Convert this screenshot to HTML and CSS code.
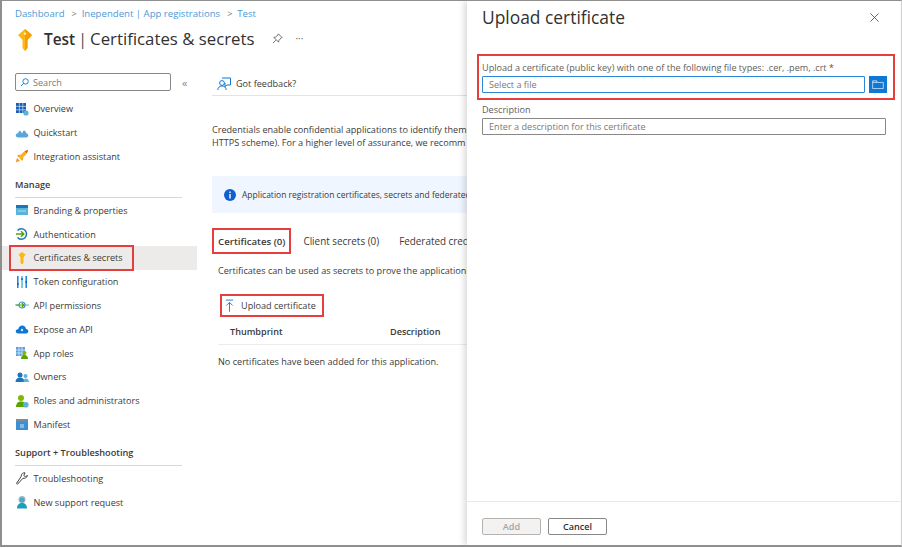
FILE: index.html
```html
<!DOCTYPE html>
<html lang="en">
<head>
<meta charset="utf-8">
<title>Test | Certificates &amp; secrets</title>
<link rel="stylesheet" href="styles.css">
</head>
<body>
<div class="frame">
  <main class="portal">
    <nav class="crumbs"><a>Dashboard</a><span class="sep">&gt;</span><a>Inependent | App registrations</a><span class="sep">&gt;</span><a>Test</a></nav>
    <header class="title-row">
      <svg class="title-key" viewBox="0 0 16 22"><path fill="#fdb813" d="M8 0 15 6 10.500 11V19L8 22 5.500 19V11L1 6Z"/><path fill="#f59e0b" d="M8 0 15 6 10.500 11V19L8 22Z"/><circle cx="8" cy="4.600" r="1.200" fill="#fff3c4"/></svg>
      <h1 class="title"><b>Test</b> <i class="bar">|</i> Certificates &amp; secrets</h1>
      <svg class="pin" viewBox="0 0 12 12"><path fill="none" stroke="#555" stroke-width=".9" d="M7 1 11 5 9.600 5.600 7.400 8.400 7.200 10 2 4.800 3.600 4.600 6.400 2.400ZM4.200 7.800 1 11"/></svg>
      <span class="more">···</span>
    </header>
    <div class="columns">
      <aside class="side">
        <div class="search-row">
          <div class="search">
            <svg class="search-ic" viewBox="0 0 10 10"><circle cx="6.200" cy="3.800" r="3" fill="none" stroke="#0078d4"/><path stroke="#0078d4" d="M4 6 1 9"/></svg>
            <span>Search</span>
          </div>
          <span class="collapse">«</span>
        </div>
        <ul class="menu first">
          <li class="item"><svg class="ic" viewBox="0 0 14 14"><path fill="#1b5fb4" d="M1 1h10v10H1z"/><path stroke="#cfe3f7" stroke-width=".7" d="M4.400 1v10M7.800 1v10M1 4.400h10M1 7.800h10"/><circle cx="11" cy="11" r="2.600" fill="#59b4d9"/></svg>Overview</li>
          <li class="item"><svg class="ic" viewBox="0 0 14 14"><path fill="#59a6dc" d="M3.400 11.500C1.500 11.500.6 10.300.8 9 1 7.800 2 7.100 3 7.200 3.500 5.500 4.600 4.500 5.400 4.800L7 7.500 8.600 4.500C10 4.600 11 5.800 11.200 7.200 12.500 7.200 13.400 8.200 13.300 9.500 13.200 10.700 12.200 11.500 11 11.500Z"/></svg>Quickstart</li>
          <li class="item"><svg class="ic" viewBox="0 0 14 14"><path fill="#f7941d" d="M.8 13.200 2 9 5 12Z"/><path fill="#f7941d" d="M2 6.500 5.500 5.500 4 8.500ZM7.500 12 8.500 8.500 5.500 10Z"/><path fill="#fbb216" d="M3.500 8 9 2.500 13.200.8 11.500 5 6 10.500Z"/><path fill="#d9541e" d="M9.800 2.200 13.200.8 11.800 4.200Z"/></svg>Integration assistant</li>
        </ul>
        <h2 class="group manage">Manage</h2>
        <ul class="menu">
          <li class="item"><svg class="ic" viewBox="0 0 14 14"><path fill="#59b4d9" d="M1 2h12v10H1z"/><path fill="#1b75bb" d="M1 2h12v3H1z"/><path fill="#b8e0f2" d="M3 7.500h8v1H3z"/></svg>Branding &amp; properties</li>
          <li class="item"><svg class="ic" viewBox="0 0 14 14"><path fill="none" stroke="#1b75bb" stroke-width="1.500" d="M2.500 3.500A5.200 5.200 0 1 1 2.500 10.500"/><path fill="none" stroke="#57a300" stroke-width="1.500" d="M1 7h7.500M6 4.300 8.800 7 6 9.700"/></svg>Authentication</li>
          <li class="item active"><span class="mark-cert"><svg class="ic" viewBox="0 0 14 14"><path fill="#fcb714" d="M7 1 10.500 3.500 8.500 6.500V12L7 13.500 5.500 12V6.500L3.500 3.500Z"/></svg>Certificates &amp; secrets</span></li>
          <li class="item"><svg class="ic" viewBox="0 0 14 14"><path stroke="#0f86d8" stroke-width="1.500" d="M2.800 1v12M11.200 1v12"/><path stroke="#59b4d9" stroke-width="1.500" d="M7 1v12"/><path stroke="#1b5fb4" stroke-width="1.500" d="M2.800 8v2M7 3v2M11.200 6v2"/></svg>Token configuration</li>
          <li class="item"><svg class="ic" viewBox="0 0 14 14"><path stroke="#59b4d9" stroke-width="1.200" d="M0 7h4M10 7h4"/><circle cx="7" cy="7" r="3" fill="none" stroke="#3a96d6" stroke-width="1.200"/><path fill="none" stroke="#57a300" stroke-width="1.200" d="M1 7h8M6.800 5 9 7 6.800 9"/></svg>API permissions</li>
          <li class="item"><svg class="ic" viewBox="0 0 14 14"><path fill="#0f78d4" d="M3.400 11.500C1.500 11.500.6 10.300.8 9 1 7.800 2 7 3.200 7.200 3.700 4.800 5.300 3.500 7.200 3.500 9.200 3.500 10.700 5 11 7 12.500 7.100 13.400 8.200 13.300 9.500 13.200 10.700 12.200 11.500 11 11.500Z"/><circle cx="7" cy="8" r="1.200" fill="#cfe8fb"/></svg>Expose an API</li>
          <li class="item"><svg class="ic" viewBox="0 0 14 14"><path fill="#5ea0dc" d="M1 1h9v9H1z"/><path stroke="#e6f1fb" stroke-width=".7" d="M4 1v9M7 1v9M1 4h9M1 7h9"/><circle cx="9.500" cy="7" r="2" fill="#7fba00"/><path fill="#57a300" d="M6 13c0-2.500 1.500-4 3.500-4s3.500 1.500 3.500 4z"/></svg>App roles</li>
          <li class="item"><svg class="ic" viewBox="0 0 14 14"><circle cx="5" cy="5" r="2.500" fill="#1b75bb"/><path fill="#1b75bb" d="M0.500 12c0-3 2-4.500 4.500-4.500S9.500 9 9.500 12z"/><circle cx="10.500" cy="6" r="2" fill="#59b4d9"/><path fill="#59b4d9" d="M8.500 12c0-2 .8-3.500 2.300-3.500S14 10 14 12z"/></svg>Owners</li>
          <li class="item"><svg class="ic" viewBox="0 0 14 14"><circle cx="6" cy="4" r="3" fill="#7fba00"/><path fill="#57a300" d="M1 13c0-3.500 2-5.500 5-5.500s5 2 5 5.500z"/><circle cx="10.800" cy="10.800" r="2.800" fill="#59b4d9"/></svg>Roles and administrators</li>
          <li class="item"><svg class="ic" viewBox="0 0 14 14"><path fill="#3e8fd0" d="M1 2h12v11H1z"/><path fill="#7d8b99" d="M1 2h12v2.500H1z"/><path fill="#cfe3f7" d="M5.500 7h1v4h-1zM7.500 7h1v4h-1z"/></svg>Manifest</li>
        </ul>
        <h2 class="group support">Support + Troubleshooting</h2>
        <ul class="menu">
          <li class="item"><svg class="ic" viewBox="0 0 14 14"><path fill="none" stroke="#444" d="M1.500 12.500 2.500 13.200 8 7.200C10 7.800 12 6.500 12.500 4.500L10.300 5.700 8.800 4.500 10 1.800C8 1.500 6 3 6.200 5.300Z"/></svg>Troubleshooting</li>
          <li class="item"><svg class="ic" viewBox="0 0 14 14"><circle cx="7" cy="4.500" r="3.500" fill="#a9b4bd"/><circle cx="7" cy="5" r="2.500" fill="#3ab1cf"/><path fill="#1b9dc0" d="M2 13.500c0-3.500 2-5.500 5-5.500s5 2 5 5.500z"/></svg>New support request</li>
        </ul>
      </aside>
      <section class="content">
        <div class="feedback"><svg class="fb-ic" viewBox="0 0 14 14"><circle cx="5" cy="6" r="2.400" fill="none" stroke="#0f78d4"/><path fill="none" stroke="#0f78d4" d="M.8 13C1 10.500 2.500 9 5 9s4 1.500 4.200 4M5 1h8.500v7H10L8 9.500V6"/></svg>Got feedback?</div>
        <p class="intro">Credentials enable confidential applications to identify them<br>HTTPS scheme). For a higher level of assurance, we recomm</p>
        <div class="info"><svg class="info-ic" viewBox="0 0 12 12"><circle cx="6" cy="6" r="6" fill="#0f5fd0"/><path fill="#fff" d="M5.300 5h1.400v4.500H5.300zM5.300 2.500h1.400v1.400H5.300z"/></svg>Application registration certificates, secrets and federated</div>
        <div class="tabs"><span class="tab selected">Certificates (0)</span><span class="tab">Client secrets (0)</span><span class="tab">Federated cred</span></div>
        <p class="tab-desc">Certificates can be used as secrets to prove the application</p>
        <div class="upload"><svg class="up-ic" viewBox="0 0 10 14"><path fill="none" stroke="#0f78d4" d="M1 1h8M5 14V3.500M1.500 7 5 3.500 8.500 7"/></svg>Upload certificate</div>
        <div class="thead"><span class="col-thumb">Thumbprint</span><span>Description</span></div>
        <p class="empty">No certificates have been added for this application.</p>
      </section>
    </div>
  </main>
  <aside class="panel">
    <div class="panel-head">
      <h2 class="panel-title">Upload certificate</h2>
      <svg class="close" viewBox="0 0 10 10"><path stroke="#444" stroke-width=".9" d="M.5.500l9 9M9.500.500l-9 9"/></svg>
    </div>
    <form class="form">
      <div class="file-block">
        <label class="label">Upload a certificate (public key) with one of the following file types: .cer, .pem, .crt <em>*</em></label>
        <div class="file-row">
          <div class="input focus">Select a file</div>
          <span class="browse"><svg viewBox="0 0 14 11"><path fill="none" stroke="#fff" stroke-width=".8" d="M.5 10.500V1H5.500V3H13.500V10.500ZM.5 3H5.500"/></svg></span>
        </div>
      </div>
      <label class="label desc-label">Description</label>
      <div class="input">Enter a description for this certificate</div>
    </form>
    <footer class="panel-foot"><span class="btn disabled">Add</span><span class="btn cancel">Cancel</span></footer>
  </aside>
</div>
</body>
</html>
```
FILE: styles.css
```css
* { box-sizing: border-box; }
html, body { margin: 0; padding: 0; }
body {
  width: 902px;
  height: 548px;
  overflow: hidden;
  background: #fff;
  font-family: "Open Sans", "Noto Sans", sans-serif;
  font-size: 9.1px;
  color: #3b3a39;
}
ul, h1, h2, p { margin: 0; padding: 0; font-weight: 400; }
ul { list-style: none; }

.frame {
  display: flex;
  width: 902px;
  height: 547px;
  border: 1px solid #8f8f8f;
  border-left-width: 2px;
  border-bottom-width: 2px;
  border-right-color: #d0d0d0;
  overflow: hidden;
}
.portal { width: 465px; flex: none; overflow: hidden; }

.crumbs { display: flex; align-items: center; height: 12px; margin: 6px 0 0 13px; color: #4a9ad8; white-space: nowrap; font-size: 9.6px; }
.sep { margin: 0 5px 0 7px; color: #777; font-size: 9px; }

.title-row { display: flex; align-items: center; height: 26px; margin: 6px 0 0 13px; white-space: nowrap; }
.title-key { width: 16px; height: 22px; margin: 4px 11px 0 2px; flex: none; }
.title { font-size: 16.8px; color: #323130; }
.title b { font-weight: 600; font-size: 15.4px; }
.bar { font-style: normal; color: #555; margin: 0 -1.5px; }
.pin { width: 11px; height: 11px; margin-left: 18px; }
.more { margin-left: 12px; color: #666; font-size: 10px; }

.columns { display: flex; margin-top: 21px; }
.side { width: 195px; flex: none; padding-top: 1px; }
.search-row { display: flex; align-items: center; padding-left: 13px; }
.search { display: flex; align-items: center; width: 156px; height: 18px; border: 1px solid #8a8886; border-radius: 2px; padding-left: 4px; color: #7a7876; }
.search-ic { width: 9px; height: 9px; margin-right: 4px; }
.collapse { margin-left: 11px; font-size: 11px; color: #8a8886; line-height: 1; }

.menu.first { margin-top: 6px; }
.item { display: flex; align-items: center; height: 23.8px; padding-left: 13px; white-space: nowrap; }
.ic { width: 14px; height: 14px; margin-right: 4.500px; flex: none; }
.active { background: #edebe9; padding-left: 8px; }
.mark-cert { display: flex; align-items: center; width: 123px; height: 24px; padding-left: 5px; outline: 2px solid #e53e3e; outline-offset: -1px; }

.group { display: flex; align-items: flex-end; width: 167px; margin-left: 13px; padding-bottom: 6px; border-bottom: 1px solid #d8d8d8; font-size: 9.200px; font-weight: 600; color: #3b3a39; }
.manage { height: 29px; margin-top: 1px; }
.support { height: 28px; margin-top: 2px; }

.content { width: 255px; flex: none; margin-left: 15px; white-space: nowrap; overflow: hidden; }
.feedback { display: flex; align-items: center; height: 24px; padding-left: 5px; border-bottom: 1px solid #e3e3e3; }
.fb-ic { width: 14px; height: 14px; margin-right: 5px; }
.intro { margin-top: 27px; line-height: 13px; }
.info { display: flex; align-items: center; height: 37px; margin-top: 27px; padding-left: 12px; background: #f0f6ff; font-size: 8.500px; }
.info-ic { width: 12px; height: 12px; margin-right: 6px; flex: none; }
.tabs { display: flex; height: 24px; margin-top: 16px; margin-left: 1px; font-size: 9.900px; align-items: center; }
.tab { margin-right: 20px; }
.tab.selected { display: flex; align-items: center; height: 24px; padding: 0 5px; margin-right: 13px; outline: 2px solid #e53e3e; outline-offset: -1px; font-size: 9.700px; font-weight: 600; }
.tab-desc { margin: 11px 0 0 6px; line-height: 13px; }
.upload { display: flex; align-items: center; width: 102px; height: 21px; margin: 18px 0 0 9px; padding-left: 4px; outline: 2px solid #e53e3e; outline-offset: -1px; }
.up-ic { width: 9px; height: 13px; margin-right: 7px; }
.thead { display: flex; align-items: center; height: 27px; margin: 2px 0 0 6px; padding-left: 12px; border-bottom: 1px solid #ececec; font-weight: 600; }
.col-thumb { width: 160px; }
.empty { margin: 10px 0 0 6px; line-height: 13px; }

.panel { position: relative; display: flex; flex-direction: column; width: 433px; flex: none; background: #fff; box-shadow: -3px 0 6px rgba(0,0,0,.14); }
.panel-head { display: flex; justify-content: space-between; align-items: center; height: 32px; padding: 0 21px 0 15px; }
.panel-title { font-size: 17.4px; font-weight: 500; color: #323130; }
.close { width: 9px; height: 9px; }
.form { flex: 1; padding: 22px 14px 0 15px; }
.file-block { position: relative; height: 44px; margin: 0 -8px 0 -4px; padding: 6px 4px 0; outline: 2px solid #e53e3e; outline-offset: -1px; }
.label { display: block; height: 15px; line-height: 13px; white-space: nowrap; color: #605e5c; }
.label em { font-style: normal; color: #c4262e; }
.file-row { display: flex; gap: 4px; }
.file-row .input { width: 383px; }
.input { display: flex; align-items: center; height: 17px; padding-left: 6px; border: 1px solid #8a8886; border-radius: 1px; color: #7a7876; }
.input.focus { border-color: #2b88d8; }
.browse { display: flex; align-items: center; justify-content: center; width: 18px; height: 17px; background: #0f78d4; }
.browse svg { width: 12px; height: 9px; }
.desc-label { margin-top: 4px; }
.panel-foot { display: flex; gap: 7px; height: 44px; padding: 16px 0 0 15px; border-top: 1px solid #e8e8e8; }
.btn { display: flex; align-items: center; justify-content: center; width: 59px; height: 17px; border: 1px solid #8a8886; border-radius: 2px; font-weight: 600; color: #323130; }
.btn.disabled { background: #f3f2f1; border-color: #b5b3b1; color: #a6a4a2; }
```
